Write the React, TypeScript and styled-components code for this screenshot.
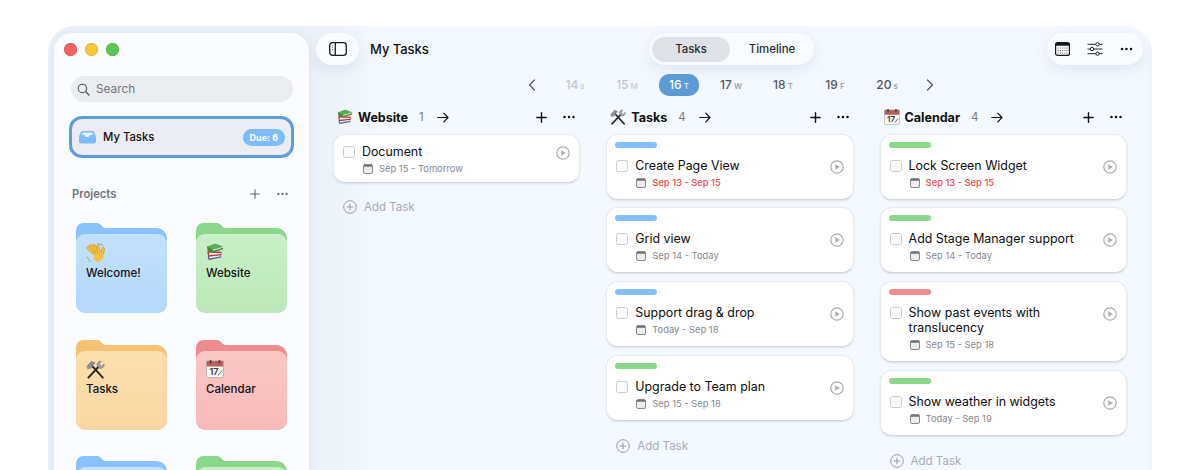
import React from "react";
import styled, { createGlobalStyle } from "styled-components";

const Global = createGlobalStyle`
  html, body { margin: 0; padding: 0; height: 470px; overflow: hidden; background: #fff; }
  body { font-family: Inter, "Liberation Sans", sans-serif; color: #111; -webkit-font-smoothing: antialiased; }
  #root { height: 470px; overflow: hidden; }
`;

const Page = styled.div`
  height: 470px;
  padding: 26px 48px 0;
  box-sizing: border-box;
  overflow: hidden;
`;
const Win = styled.div`
  height: 444px;
  display: flex;
  padding: 7px 0 0 6px;
  box-sizing: border-box;
  border-radius: 26px 26px 0 0;
  background: linear-gradient(90deg, #ebf1f8 0, #ebf1f8 262px, #f4f8ff 330px, #f4f8ff 1098px, #eef3fa 1104px);
  overflow: hidden;
`;
const Sidebar = styled.aside`
  width: 255px;
  flex: none;
  height: 480px;
  padding: 10px 16px 0 17px;
  box-sizing: border-box;
  background: #fbfcff;
  border-radius: 18px 18px 0 0;
  box-shadow: 0 0 6px rgba(120, 140, 170, 0.12);
`;
const Lights = styled.div`
  display: flex;
  gap: 8px;
  margin-left: -7px;
`;
const Light = styled.span<{ $c: string; $b: string }>`
  width: 13px;
  height: 13px;
  border-radius: 50%;
  background: ${p => p.$c};
  box-shadow: inset 0 0 0 0.5px ${p => p.$b};
`;
const Search = styled.div`
  margin-top: 20px;
  height: 26px;
  border-radius: 13px;
  background: #eaecf0;
  display: flex;
  align-items: center;
  gap: 6px;
  padding-left: 6px;
  font-size: 11.8px;
  line-height: 27px;
  color: #74777c;
`;
const MyTasks = styled.div`
  margin: 14px -1px 0 -2px;
  height: 42px;
  box-sizing: border-box;
  border: 3px solid #5d9cd8;
  border-radius: 13px;
  background: #ecedf2;
  display: flex;
  align-items: center;
  padding: 0 6px 0 7px;
  font-size: 11.3px;
  line-height: 37px;
  font-weight: 500;
  gap: 7px;
`;
const Badge = styled.span`
  margin-left: auto;
  height: 17px;
  padding: 0 7px;
  border-radius: 9px;
  background: #7dbdfb;
  color: #fff;
  font-size: 9px;
  font-weight: 700;
  line-height: 17px;
`;
const SectionHead = styled.div`
  margin-top: 28px;
  height: 16px;
  display: flex;
  align-items: center;
  padding: 0 5px 0 1px;
  font-size: 11.2px;
  font-weight: 600;
  color: #707378;
  gap: 17px;
`;
const Spacer = styled.span`
  flex: 1;
`;
const FolderGrid = styled.div`
  margin: 21px 0 0 5px;
  display: grid;
  grid-template-columns: 91px 91px;
  grid-auto-rows: 90px;
  column-gap: 29px;
  row-gap: 26.7px;
`;
const FolderBox = styled.div`
  position: relative;
  width: 91px;
  height: 90px;
`;
const FolderBack = styled.svg`
  position: absolute;
  left: 0;
  top: 0;
`;
const FolderFront = styled.div<{ $from: string; $to: string }>`
  position: absolute;
  inset: 11px 0 0;
  padding: 9px 10px;
  border-radius: 9px;
  background: linear-gradient(180deg, ${p => p.$from}, ${p => p.$to});
  font-size: 11.5px;
  font-weight: 450;
  line-height: 14px;
  color: #111;
  display: flex;
  flex-direction: column;
  gap: 3.5px;
`;
const FolderIcon = styled.span`
  display: block;
  height: 19px;
  svg { display: block; }
`;
const Main = styled.main`
  flex: 1;
  min-width: 0;
  padding: 0 9px 0 7px;
`;
const TopBar = styled.header`
  display: grid;
  grid-template-columns: 333px 165px 1fr;
  height: 32px;
`;
const TitleGroup = styled.div`
  display: flex;
  align-items: center;
  gap: 11px;
  font-size: 13px;
  font-weight: 550;
  letter-spacing: -0.05px;
`;
const Pill = styled.div`
  height: 32px;
  border-radius: 16px;
  background: #f8fbff;
  box-shadow: 0 4px 14px rgba(120, 140, 170, 0.16);
  display: flex;
  align-items: center;
  justify-content: center;
  box-sizing: border-box;
`;
const TogglePill = styled(Pill)`
  width: 43px;
`;
const SegPill = styled(Pill)`
  padding: 0 0 0 3px;
  justify-content: flex-start;
`;
const Seg = styled.span<{ $on?: boolean }>`
  width: ${p => (p.$on ? 78 : 84)}px;
  height: 25px;
  border-radius: 12.5px;
  background: ${p => (p.$on ? "#dfe3e7" : "transparent")};
  font-size: 11.4px;
  font-weight: 450;
  line-height: 25px;
  text-align: center;
  color: #2a2c30;
`;
const RightPill = styled(Pill)`
  width: 96px;
  justify-self: end;
  gap: 17px;
  padding-right: 2px;
`;
const DateRow = styled.nav`
  margin-top: 9px;
  height: 22px;
  display: flex;
  align-items: center;
  justify-content: center;
  gap: 12px;
  padding-left: 3px;
`;
const Chevron = styled.svg<{ $left?: boolean }>`
  margin: ${p => (p.$left ? "0 7px 0 0" : "0 0 0 7px")};
`;
const DayItem = styled.span<{ $state: "past" | "on" | "next" }>`
  width: 40px;
  height: 22px;
  border-radius: 10px;
  display: flex;
  align-items: baseline;
  justify-content: center;
  gap: 2px;
  line-height: 22px;
  font-size: 12px;
  font-weight: 550;
  background: ${p => (p.$state === "on" ? "#5d9bd7" : "transparent")};
  color: ${p => (p.$state === "on" ? "#fff" : p.$state === "past" ? "#c2c6cc" : "#54575c")};
  small {
    font-size: 8px;
    font-weight: 500;
    color: ${p => (p.$state === "on" ? "#e6f0fa" : p.$state === "past" ? "#c9cdd2" : "#94979c")};
  }
`;
const Board = styled.section`
  margin: 13px 0 0 17px;
  display: grid;
  grid-template-columns: repeat(3, 247.3px);
  column-gap: 26px;
  align-items: start;
`;
const Column = styled.div`
  display: flex;
  flex-direction: column;
`;
const ColHead = styled.div`
  height: 16px;
  padding: 0 5px 0 4px;
  display: flex;
  align-items: center;
  margin-bottom: 8.5px;
`;
const ColTitle = styled.span`
  margin-left: 5px;
  font-size: 12.6px;
  font-weight: 650;
  letter-spacing: -0.05px;
`;
const ColCount = styled.span`
  margin: 0 13px 0 11px;
  font-size: 11.5px;
  color: #77797e;
`;
const HeadActions = styled.span`
  margin-left: auto;
  display: flex;
  align-items: center;
  gap: 16px;
`;
const Cards = styled.div`
  display: flex;
  flex-direction: column;
  gap: 7.85px;
`;
const Card = styled.article<{ $tagged: boolean }>`
  background: #fff;
  border: 1px solid #e8ebf0;
  border-bottom-color: #d3d6db;
  border-radius: 12px;
  box-shadow: 0 1px 2px rgba(70, 80, 100, 0.14);
  box-sizing: border-box;
  padding: ${p => (p.$tagged ? "7px 9px 10px 9px" : "9px 9px 7px 9px")};
`;
const Tag = styled.div<{ $c: string }>`
  width: 42px;
  height: 6px;
  border-radius: 3px;
  background: ${p => p.$c};
  margin: 0 0 10px -1px;
`;
const Row = styled.div`
  display: flex;
  gap: 7px;
`;
const Check = styled.span`
  flex: none;
  width: 12px;
  height: 12px;
  margin-top: 2px;
  box-sizing: border-box;
  border: 1px solid #c9cbcf;
  border-radius: 2.5px;
  background: #fcfcfc;
`;
const CardBody = styled.div`
  flex: 1;
  min-width: 0;
  padding-right: 7px;
`;
const CardTitle = styled.div`
  font-size: 12.4px;
  line-height: 15px;
  font-weight: 400;
  color: #0c0c0e;
`;
const Meta = styled.div<{ $late?: boolean }>`
  margin-top: 4px;
  padding-left: 1px;
  display: flex;
  align-items: center;
  gap: 6px;
  font-size: 9.4px;
  line-height: 12px;
  color: ${p => (p.$late ? "#f0484a" : "#85888d")};
  font-weight: ${p => (p.$late ? 500 : 400)};
`;
const Play = styled.svg`
  flex: none;
  margin-top: 2px;
`;
const AddTask = styled.div`
  margin: 16.5px 0 0 10px;
  height: 16px;
  display: flex;
  align-items: center;
  gap: 7px;
  font-size: 11.5px;
  color: #a9acb1;
`;

/* ---- drawings ---- */
const SearchIcon = () => (
  <svg width="13" height="13" viewBox="0 0 13 13" fill="none" stroke="#55585c" strokeWidth="1.1">
    <circle cx="5.4" cy="5.4" r="4.2" />
    <path d="M8.5 8.5 12 12" strokeWidth="1.4" strokeLinecap="round" />
  </svg>
);
const Inbox = () => (
  <svg width="17" height="14" viewBox="0 0 17 14">
    <path d="M3.6 1h9.8c.8 0 1.3.4 1.7 1L17 6.5V11.5c0 1.2-.8 2-2 2H2c-1.2 0-2-.8-2-2V6.5L1.9 2C2.3 1.4 2.8 1 3.6 1z" fill="#7dbdfb" />
    <path d="M2.6 4.8 4 2.4h9l1.4 2.4h-3.2l-1.4 2.2H7L5.6 4.8z" fill="#e8f3fe" />
  </svg>
);
const Plus = ({ s = 11, c = "#111", w = 1.4 }: { s?: number; c?: string; w?: number }) => (
  <svg width={s} height={s} viewBox="0 0 11 11" stroke={c} strokeWidth={w} strokeLinecap="round">
    <path d="M5.5 .8v9.4M.8 5.5h9.4" />
  </svg>
);
const Dots = ({ c = "#111", w = 12 }: { c?: string; w?: number }) => (
  <svg width={w} height="4" viewBox="0 0 12 4" fill={c}>
    <circle cx="1.5" cy="2" r="1.25" />
    <circle cx="6" cy="2" r="1.25" />
    <circle cx="10.5" cy="2" r="1.25" />
  </svg>
);
const Arrow = () => (
  <svg width="12" height="11" viewBox="0 0 12 11" fill="none" stroke="#111" strokeWidth="1.2" strokeLinecap="round" strokeLinejoin="round">
    <path d="M.8 5.5h10.2M6.8 1.2 11 5.5 6.8 9.8" />
  </svg>
);
const ToggleIcon = () => (
  <svg width="18" height="14" viewBox="0 0 18 14" fill="none" stroke="#1b1c1f" strokeWidth="1.3">
    <rect x=".7" y=".7" width="16.6" height="12.6" rx="2.8" />
    <path d="M6.3 .7v12.6" />
    <path d="M3 3.5h.9M3 5.5h.9M3 7.5h.9" strokeWidth="1.1" stroke="#777" />
  </svg>
);
const CalendarBar = () => (
  <svg width="15" height="14" viewBox="0 0 15 14">
    <rect x=".6" y=".6" width="13.8" height="12.8" rx="2" fill="#fff" stroke="#16171a" strokeWidth="1.2" />
    <path d="M1 1h13v2.8H1z" fill="#16171a" />
    <g fill="#777">
      {[5.5, 8, 10.5].map(y => [3, 5.3, 7.6, 9.9, 12].map(x => <rect key={`${x}-${y}`} x={x - 0.5} y={y} width="1.1" height="1.1" />))}
    </g>
  </svg>
);
const Sliders = () => (
  <svg width="16" height="14" viewBox="0 0 16 14" fill="#f8fbff" stroke="#2b2c30" strokeWidth="1">
    <path d="M.5 2.3h15M.5 7h15M.5 11.7h15" />
    <circle cx="10.5" cy="2.3" r="1.7" />
    <circle cx="5" cy="7" r="1.7" />
    <circle cx="10.5" cy="11.7" r="1.7" />
  </svg>
);
const ChevronIcon = ({ left }: { left?: boolean }) => (
  <Chevron $left={left} width="8" height="12" viewBox="0 0 8 12" fill="none" stroke="#55585c" strokeWidth="1.3" strokeLinecap="round" strokeLinejoin="round">
    <path d={left ? "M6.5 1 1.5 6l5 5" : "M1.5 1l5 5-5 5"} />
  </Chevron>
);
const MiniCal = () => (
  <svg width="10" height="10" viewBox="0 0 10 10">
    <rect x=".5" y=".5" width="9" height="9" rx="1.5" fill="#eceded" stroke="#86888c" />
    <path d="M1 1h8v1.8H1z" fill="#707276" />
  </svg>
);
const PlayIcon = () => (
  <Play width="14" height="14" viewBox="0 0 14 14">
    <circle cx="7" cy="7" r="6.2" fill="none" stroke="#a9abaf" strokeWidth="1.2" />
    <path d="M5.3 4.2v5.6l4.5-2.8z" fill="#a9abaf" />
  </Play>
);
const AddIcon = () => (
  <svg width="14" height="14" viewBox="0 0 14 14" fill="none" stroke="#9a9da2" strokeWidth="1">
    <circle cx="7" cy="7" r="6.3" />
    <path d="M7 3.8v6.4M3.8 7h6.4" strokeWidth="1.1" />
  </svg>
);

const Wave = ({ s = 20 }: { s?: number }) => (
  <svg width={s} height={s} viewBox="0 0 20 20">
    <g stroke="#8c98a4" strokeWidth="1" strokeLinecap="round">
      <path d="M.8 14 2.3 15.6M2.6 17l1.8 1.5M11.5 .8l2.3.8M15 1.2l2 1.4" />
    </g>
    <g fill="#f7c242" stroke="#cf8f16" strokeWidth=".6">
      <rect x="4.2" y="2" width="2.9" height="12" rx="1.45" transform="rotate(-48 5.6 8)" />
      <rect x="6.1" y=".8" width="2.9" height="12.5" rx="1.45" transform="rotate(-36 7.5 7)" />
      <rect x="8.6" y="1" width="2.9" height="12.5" rx="1.45" transform="rotate(-24 10 7)" />
      <rect x="11.2" y="2.4" width="2.8" height="11" rx="1.4" transform="rotate(-12 12.6 8)" />
      <rect x="15" y="4.4" width="2.8" height="8" rx="1.4" transform="rotate(14 16 9)" />
    </g>
    <path d="M7.5 11.2 15.3 9 17.4 11.5c.5 3.2-.9 5.6-3.8 6.8-2.9 1.1-4.7-.2-5.8-2.6z" fill="#f7c242" />
  </svg>
);
const Books = ({ s = 18 }: { s?: number }) => (
  <svg width={s} height={s} viewBox="0 0 18 18">
    <path d="M2 12.5 15 11v3.5L3 17c-1.3-.8-1.3-3.7-1-4.5z" fill="#4f5c9e" />
    <path d="M3 13.6l11.5-1.4v1.3L3.2 15.4z" fill="#e6e6ea" />
    <path d="M1.5 8 15.5 8.8v3L3 13.5C1.6 12.6 1.3 9.5 1.5 8z" fill="#c2362f" />
    <path d="M3 9.7 15 10.2v.9L3.2 12.2z" fill="#eee" />
    <path d="M1 3.8 9.5 .8 17 3.8v2.4L6.8 9.5 1.6 7.5z" fill="#3d8a3b" />
    <path d="M1 3.8 9.5 .8 17 3.8 6.8 6.8z" fill="#5fae52" />
    <path d="M6.8 6.8 17 3.8v1L6.8 8z" fill="#e9e9e4" />
  </svg>
);
const Tools = ({ s = 19 }: { s?: number }) => (
  <svg width={s} height={s} viewBox="0 0 19 19" strokeLinecap="round">
    <path d="M5.2 4.8 16.8 17.6" stroke="#2d2a28" strokeWidth="2" />
    <path d="M1 6.2 5.6 1.3l3.2 1.6-.6 1.3L6.7 4 6.3 6.6 4.3 8.5l-1-.4-1 1z" fill="#8d9299" stroke="#5b5f65" strokeWidth=".5" />
    <path d="M13 6.3 2.4 17.6" stroke="#2d2a28" strokeWidth="2" />
    <path d="M11.2 5.8C10.6 3 12.8 .7 15.4 1.2l-2 2.3.5 2 2 .5 2.2-2c.5 2.8-1.8 4.9-4.6 4.3z" fill="#a2a7ad" stroke="#63676d" strokeWidth=".5" />
  </svg>
);
const CalEmoji = ({ s = 18 }: { s?: number }) => (
  <svg width={s} height={s} viewBox="0 0 18 18">
    <rect x=".5" y=".8" width="17" height="16.7" rx="1.2" fill="#f8f7f5" stroke="#9a9a9a" strokeWidth=".6" />
    <path d="M.8 1h16.4v5.5H.8z" fill="#b9605c" />
    <g fill="#3c3c3e">
      <rect x="3.8" y="0" width="1.5" height="3.6" rx=".6" />
      <rect x="12.7" y="0" width="1.5" height="3.6" rx=".6" />
    </g>
    <text x="8" y="15" fontSize="9" fontFamily="Inter, sans-serif" fontWeight="600" textAnchor="middle" fill="#333">17</text>
    <path d="M12 15.5 16 10.5" stroke="#666" strokeWidth="1" />
  </svg>
);

/* ---- data ---- */
const colours = {
  blue: { back: "#8ac2fb", from: "#c4e1fe", to: "#b3d8fc", bar: "#85c0fa" },
  green: { back: "#8cd88a", from: "#c9f0c8", to: "#bbe8ba", bar: "#8cd88a" },
  orange: { back: "#f6c274", from: "#fcdfae", to: "#fad7a2", bar: "#f6c274" },
  red: { back: "#ee8d8d", from: "#fac7c7", to: "#f7b9b9", bar: "#ee8d8d" },
};
type Tint = keyof typeof colours;

const Folder = ({ tint, name, icon }: { tint: Tint; name?: string; icon?: React.ReactNode }) => {
  const c = colours[tint];
  return (
    <FolderBox>
      <FolderBack width="91" height="40" viewBox="0 0 91 40">
        <path d="M0 9C0 3 3 0 8 0H21C25 0 26 5 30 5H80C87 5 91 10 91 16V40H0z" fill={c.back} />
      </FolderBack>
      <FolderFront $from={c.from} $to={c.to}>
        {icon && <FolderIcon>{icon}</FolderIcon>}
        {name && <span>{name}</span>}
      </FolderFront>
    </FolderBox>
  );
};

type Task = { title: string; date: string; tag?: Tint; late?: boolean };
const columns: { icon: React.ReactNode; name: string; count: number; tasks: Task[] }[] = [
  { icon: <Books s={16} />, name: "Website", count: 1, tasks: [{ title: "Document", date: "Sep 15 - Tomorrow" }] },
  {
    icon: <Tools s={16} />, name: "Tasks", count: 4,
    tasks: [
      { title: "Create Page View", date: "Sep 13 - Sep 15", tag: "blue", late: true },
      { title: "Grid view", date: "Sep 14 - Today", tag: "blue" },
      { title: "Support drag & drop", date: "Today - Sep 18", tag: "blue" },
      { title: "Upgrade to Team plan", date: "Sep 15 - Sep 18", tag: "green" },
    ],
  },
  {
    icon: <CalEmoji s={16} />, name: "Calendar", count: 4,
    tasks: [
      { title: "Lock Screen Widget", date: "Sep 13 - Sep 15", tag: "green", late: true },
      { title: "Add Stage Manager support", date: "Sep 14 - Today", tag: "green" },
      { title: "Show past events with translucency", date: "Sep 15 - Sep 18", tag: "red" },
      { title: "Show weather in widgets", date: "Today - Sep 19", tag: "green" },
    ],
  },
];
const days: [string, string, "past" | "on" | "next"][] = [
  ["14", "s", "past"], ["15", "M", "past"], ["16", "T", "on"], ["17", "W", "next"],
  ["18", "T", "next"], ["19", "F", "next"], ["20", "s", "next"],
];

export default function App() {
  return (
    <Page>
      <Global />
      <Win>
        <Sidebar>
          <Lights>
            <Light $c="#f0625f" $b="#dc4f4c" />
            <Light $c="#f6c636" $b="#e2b02a" />
            <Light $c="#5fc454" $b="#4eae45" />
          </Lights>
          <Search><SearchIcon />Search</Search>
          <MyTasks><Inbox />My Tasks<Badge>Due: 6</Badge></MyTasks>
          <SectionHead>
            Projects<Spacer />
            <Plus s={10} c="#66696d" w={1.2} />
            <Dots c="#66696d" w={11} />
          </SectionHead>
          <FolderGrid>
            <Folder tint="blue" name="Welcome!" icon={<Wave />} />
            <Folder tint="green" name="Website" icon={<Books />} />
            <Folder tint="orange" name="Tasks" icon={<Tools />} />
            <Folder tint="red" name="Calendar" icon={<CalEmoji />} />
            <Folder tint="blue" />
            <Folder tint="green" />
          </FolderGrid>
        </Sidebar>
        <Main>
          <TopBar>
            <TitleGroup>
              <TogglePill><ToggleIcon /></TogglePill>
              My Tasks
            </TitleGroup>
            <SegPill>
              <Seg $on>Tasks</Seg>
              <Seg>Timeline</Seg>
            </SegPill>
            <RightPill><CalendarBar /><Sliders /><Dots w={13} /></RightPill>
          </TopBar>
          <DateRow>
            <ChevronIcon left />
            {days.map(([n, d, s]) => (
              <DayItem key={n} $state={s}>{n}<small>{d}</small></DayItem>
            ))}
            <ChevronIcon />
          </DateRow>
          <Board>
            {columns.map(col => (
              <Column key={col.name}>
                <ColHead>
                  {col.icon}
                  <ColTitle>{col.name}</ColTitle>
                  <ColCount>{col.count}</ColCount>
                  <Arrow />
                  <HeadActions><Plus /><Dots /></HeadActions>
                </ColHead>
                <Cards>
                  {col.tasks.map(t => (
                    <Card key={t.title} $tagged={!!t.tag}>
                      {t.tag && <Tag $c={colours[t.tag].bar} />}
                      <Row>
                        <Check />
                        <CardBody>
                          <CardTitle>{t.title}</CardTitle>
                          <Meta $late={t.late}><MiniCal />{t.date}</Meta>
                        </CardBody>
                        <PlayIcon />
                      </Row>
                    </Card>
                  ))}
                </Cards>
                <AddTask><AddIcon />Add Task</AddTask>
              </Column>
            ))}
          </Board>
        </Main>
      </Win>
    </Page>
  );
}
